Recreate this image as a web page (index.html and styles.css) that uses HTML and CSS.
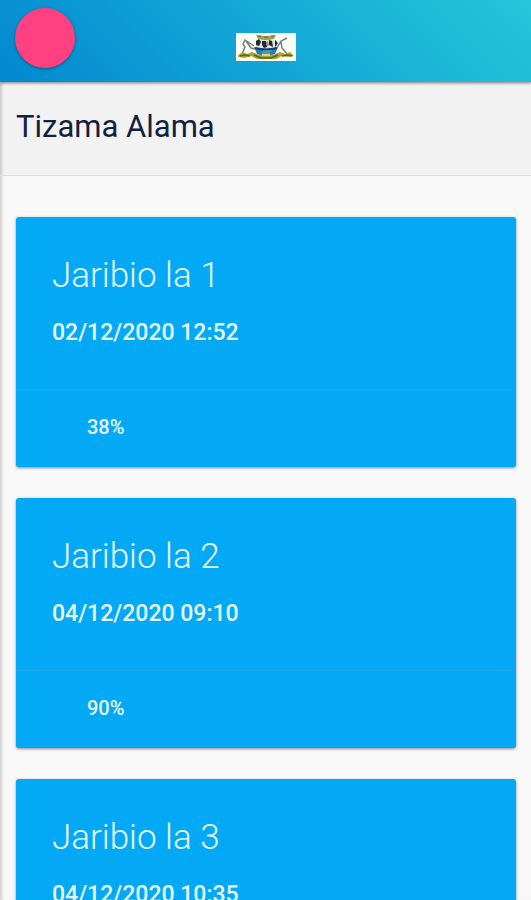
FILE: index.html
```html
<!DOCTYPE html>
<html lang="sw">
<head>
<meta charset="utf-8">
<meta name="viewport" content="width=device-width, initial-scale=1">
<title>Tizama Alama</title>
<link rel="stylesheet" href="styles.css">
</head>
<body>
<header class="topbar">
  <button class="menu-button" type="button" aria-label="Menu"></button>
  <svg class="crest" viewBox="0 0 60 28" aria-hidden="true">
    <rect width="60" height="28" fill="#fbfcf6"/>
    <path d="M20 2q10 2 20 0l-2 4q-8 2-16 0z" fill="#a3a04a"/>
    <path d="M22 3h3M28 4h4M35 3h3" stroke="#5d6a35" stroke-width="1"/>
    <path d="M20 7h21v8H20z" fill="#dce5df"/>
    <path d="M20 8l3-2 2 3-2 4-3-1zM26 8h4l1 6-3 1-2-3zM33 7l3 1 1 6-4-2zM39 7l3 3-3 4z" fill="#1b2938"/>
    <path d="M30 9l2-1 1 4-2 2z" fill="#c08a76"/>
    <path d="M18 14q12 3 24 0l-3 7q-9 4-18 0z" fill="#277fb4"/>
    <path d="M19 15q11 3 22 0" fill="none" stroke="#153f66" stroke-width="2"/>
    <path d="M27 18h9M26 20h8" stroke="#67afd0" stroke-width="1"/>
    <path d="M18 13L9 7l-2 4 2 3-3 7M10 8l5 7 4 1M41 15l4-7 6-3M45 9l1 6 5 6" fill="none" stroke="#777d79" stroke-width="1.5"/>
    <path d="M2 22l5-3 4 2 5-2 7 3 7-1 7 1 7-3 5 2 5-2 4 4-6 1-6-1-6 3H21l-6-3-6 2-7-1z" fill="#a9a52f"/>
    <path d="M4 23l5-1 5 1M18 22l7 3h10l7-3M46 23l6-1 4 1" fill="none" stroke="#5b6422" stroke-width="1.5"/>
    <path d="M26 22h8" stroke="#e8d765" stroke-width="2"/>
  </svg>
</header>
<div class="page">
  <div class="heading">
    <h1>Tizama Alama</h1>
  </div>
  <main class="cards">
    <article class="card">
      <div class="card-body">
        <h2>Jaribio la 1</h2>
        <p class="date">02/12/2020 12:52</p>
      </div>
      <p class="score">38%</p>
    </article>
    <article class="card">
      <div class="card-body">
        <h2>Jaribio la 2</h2>
        <p class="date">04/12/2020 09:10</p>
      </div>
      <p class="score">90%</p>
    </article>
    <article class="card">
      <div class="card-body">
        <h2>Jaribio la 3</h2>
        <p class="date">04/12/2020 10:35</p>
      </div>
    </article>
  </main>
</div>
</body>
</html>
```
FILE: styles.css
```css
* {
  box-sizing: border-box;
}

body {
  display: flex;
  flex-direction: column;
  height: 100vh;
  margin: 0;
  overflow: hidden;
  background: #f8f8f8;
  font-family: Roboto, "Liberation Sans", sans-serif;
}

h1,
h2,
p {
  margin: 0;
}

.topbar {
  display: grid;
  grid-template-columns: 1fr auto 1fr;
  align-items: center;
  flex: none;
  height: 82px;
  padding: 0 15px;
  background: linear-gradient(45deg, #0288d1, #26c6da);
  box-shadow: 0 1px 3px rgba(0, 0, 0, 0.5);
  z-index: 1;
}

.menu-button {
  width: 60px;
  height: 60px;
  margin-bottom: 6px;
  padding: 0;
  border: 0;
  border-radius: 50%;
  background: #ff4081;
  box-shadow: 0 1px 3px rgba(0, 0, 0, 0.4);
}

.crest {
  display: block;
  width: 60px;
  height: 28px;
  margin-top: 12px;
}

.page {
  flex: 1;
  min-height: 0;
  overflow-y: auto;
  scrollbar-width: none;
  box-shadow: inset 4px 0 3px -2px rgba(0, 0, 0, 0.16);
}

.heading {
  padding: 25px 16px 28px;
  border-bottom: 1px solid #dedede;
  background: rgba(0, 0, 0, 0.024);
}

.heading h1 {
  color: #12203f;
  font-size: 31px;
  font-weight: 400;
  line-height: 40px;
}

.cards {
  display: flex;
  flex-direction: column;
  gap: 31px;
  padding: 41px 15px 31px 16px;
}

.card {
  border-radius: 3px;
  background: #03a9f4;
  color: #e6f8ff;
  box-shadow: 0 1px 3px rgba(0, 0, 0, 0.45);
}

.card-body {
  padding: 36px 36px 38px;
}

.card h2 {
  font-size: 35px;
  font-weight: 300;
  line-height: 46px;
}

.date {
  margin-top: 16px;
  font-size: 23px;
  font-weight: 500;
  line-height: 36px;
}

.score {
  padding: 23px 71px 25px;
  border-top: 1px solid #1fa5e6;
  font-size: 20px;
  font-weight: 500;
  line-height: 29px;
}
```
